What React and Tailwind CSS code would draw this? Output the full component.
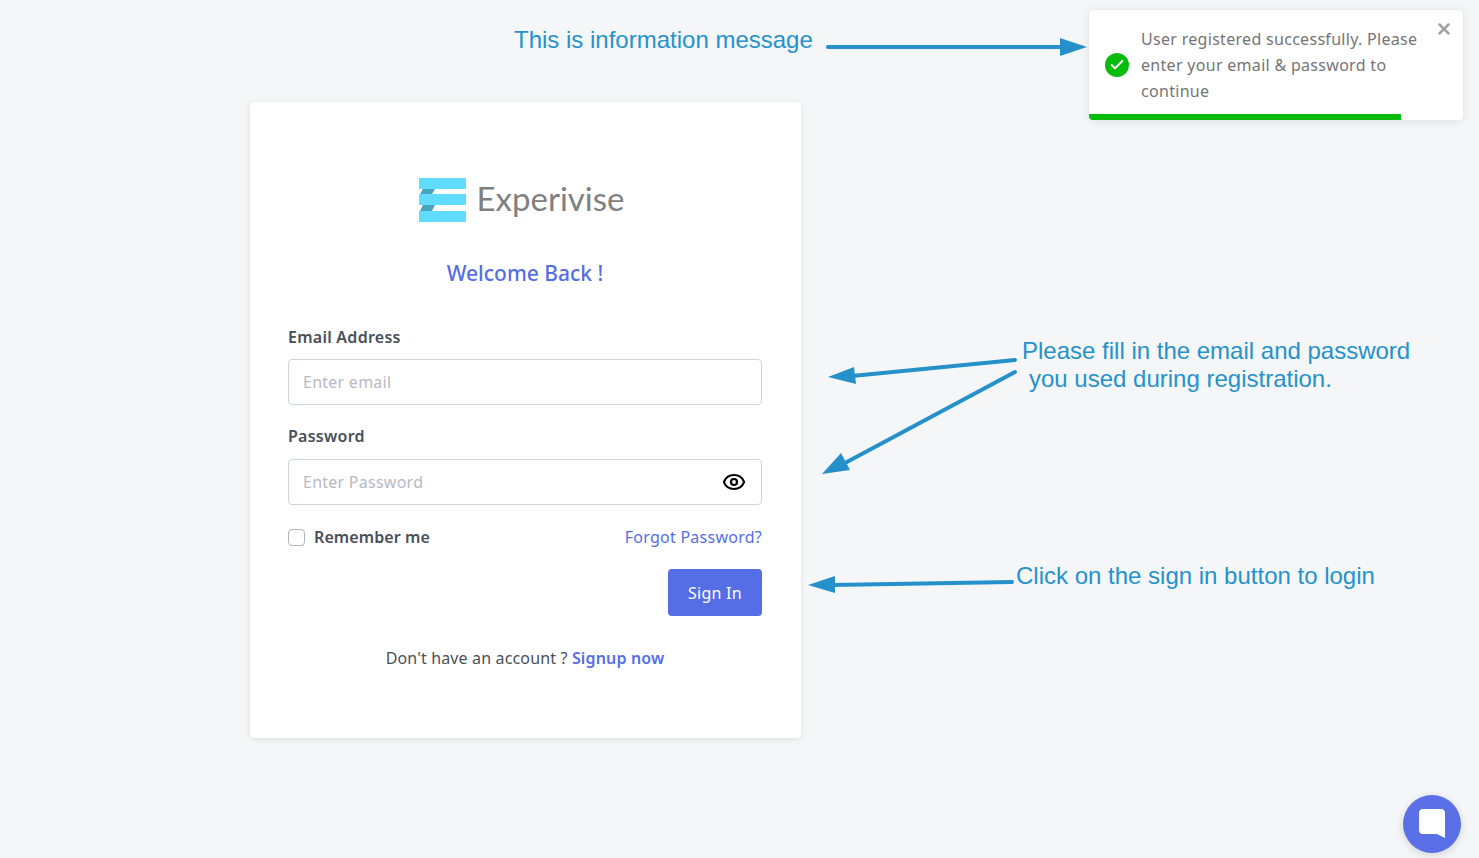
import { useState } from 'react'
import { Eye, X, Check } from 'lucide-react'

const Logo = () => (
  <div className="flex items-center justify-center h-[44px] pr-[6px]">
    <svg width="47" height="44" viewBox="0 0 47 44">
      <rect x="0" y="0" width="47" height="11" fill="#5fdcff" />
      <rect x="0" y="16" width="47" height="11" fill="#5fdcff" />
      <rect x="0" y="33" width="47" height="11" fill="#5fdcff" />
      <polygon points="4,11 16,11 13,16 1,16" fill="#4aa3bd" />
      <polygon points="4,27 16,27 13,33 1,33" fill="#4aa3bd" />
    </svg>
    <span className="ml-[10px] -mt-[4px] text-[33px] leading-[44px] font-normal tracking-normal text-[#808080] font-['Lato',sans-serif]">Experivise</span>
  </div>
)

const Toast = () => (
  <div className="absolute left-[1089px] top-[10px] w-[374px] h-[110px] bg-white rounded shadow-[0_1px_10px_rgba(0,0,0,0.1)] overflow-hidden">
    <div className="flex items-center h-[110px] pl-[16px] pr-[40px]">
      <span className="w-[24px] h-[24px] rounded-full bg-[#07bc0c] flex items-center justify-center shrink-0">
        <Check size={16} strokeWidth={3} color="white" />
      </span>
      <p className="ml-[12px] text-[16px] leading-[26px] tracking-[0.3px] text-[#757575]">
        User registered successfully. Please enter your email &amp; password to continue
      </p>
    </div>
    <X size={18} strokeWidth={3.4} className="absolute right-[10px] top-[10px] text-[#a3a3a3]" />
    <div className="absolute left-0 bottom-0 h-[6px] w-[312px] bg-[#07bc0c]" />
  </div>
)

const Annotations = () => (
  <>
    <svg className="absolute left-0 top-0 pointer-events-none" width="1479" height="858">
      <g stroke="#2590c9" strokeWidth="4" strokeLinecap="round" fill="none">
        <path d="M828 47 L1065 47" />
        <path d="M1015 360 L852 376" />
        <path d="M1015 372 L845 463" />
        <path d="M1012 582 L833 585" />
      </g>
      <g fill="#2590c9">
        <polygon points="1087,47 1060,38 1060,56" />
        <polygon points="828,377 854,367 856,384" />
        <polygon points="822,474 841,453 850,470" />
        <polygon points="808,585 835,576 835,593" />
      </g>
    </svg>
    <div className="absolute left-[514px] top-[25px] text-[24px] leading-[30px] tracking-normal text-[#2592cc] font-['Liberation_Sans',sans-serif] whitespace-nowrap">This is information message</div>
    <div className="absolute left-[1022px] top-[337px] text-[24px] leading-[28px] tracking-normal text-[#2592cc] font-['Liberation_Sans',sans-serif] whitespace-nowrap">
      Please fill in the email and password
      <div className="pl-[7px]">you used during registration.</div>
    </div>
    <div className="absolute left-[1016px] top-[561px] text-[24px] leading-[30px] tracking-normal text-[#2592cc] font-['Liberation_Sans',sans-serif] whitespace-nowrap">Click on the sign in button to login</div>
  </>
)

export default function App() {
  const [show, setShow] = useState(false)

  return (
    <div className="relative w-[1479px] h-[858px] overflow-hidden bg-[#f5f6f8] font-['Noto_Sans',sans-serif] tracking-[0.25px]">
      <div className="pl-[250px] pt-[102px]">
        <div className="w-[551px] h-[636px] bg-white rounded shadow-[0_1px_6px_rgba(0,0,0,0.1)] pl-[38px] pr-[39px] pt-[76px]">
          <Logo />
          <h1 className="mt-[36px] text-center text-[21px] leading-[30px] tracking-normal font-medium text-[#556ee6]">Welcome Back !</h1>

          <label className="block mt-[37px] text-[16px] leading-[24px] font-semibold text-[#495057]">Email Address</label>
          <input
            type="email"
            placeholder="Enter email"
            className="block mt-[10px] w-full h-[46px] px-[14px] border border-[#ced4da] rounded bg-white text-[16px] placeholder:text-[#b9b9c3]"
          />

          <label className="block mt-[19px] text-[16px] leading-[24px] font-semibold text-[#495057]">Password</label>
          <div className="relative mt-[11px]">
            <input
              type={show ? 'text' : 'password'}
              placeholder="Enter Password"
              className="block w-full h-[46px] px-[14px] border border-[#ced4da] rounded bg-white text-[16px] placeholder:text-[#b9b9c3]"
            />
            <button onClick={() => setShow(!show)} className="absolute right-[16px] top-[11px] text-black">
              <Eye size={24} strokeWidth={2.2} />
            </button>
          </div>

          <div className="flex items-center justify-between mt-[20px] h-[24px]">
            <label className="flex items-center text-[16px] font-semibold tracking-[0.1px] text-[#495057]">
              <span className="w-[17px] h-[17px] border border-[#adb5bd] rounded bg-white" />
              <span className="ml-[9px]">Remember me</span>
            </label>
            <a className="text-[16px] text-[#556ee6]">Forgot Password?</a>
          </div>

          <div className="flex justify-end mt-[20px]">
            <button className="w-[94px] h-[47px] rounded bg-[#556ee6] text-white text-[16px]">Sign In</button>
          </div>

          <p className="mt-[30px] text-center text-[16px] leading-[24px] tracking-[0.15px] text-[#495057]">
            Don't have an account ? <a className="font-semibold text-[#556ee6]">Signup now</a>
          </p>
        </div>
      </div>

      <Annotations />
      <Toast />

      <div className="absolute left-[1403px] top-[795px] w-[58px] h-[58px] rounded-full bg-[#5a70e6] shadow-[0_2px_8px_rgba(0,0,0,0.15)] flex items-center justify-center">
        <svg width="26" height="30" viewBox="0 0 26 30">
          <path d="M4 0 H22 A4 4 0 0 1 26 4 V29 L18 25 H4 A4 4 0 0 1 0 21 V4 A4 4 0 0 1 4 0 Z" fill="white" />
        </svg>
      </div>
    </div>
  )
}
